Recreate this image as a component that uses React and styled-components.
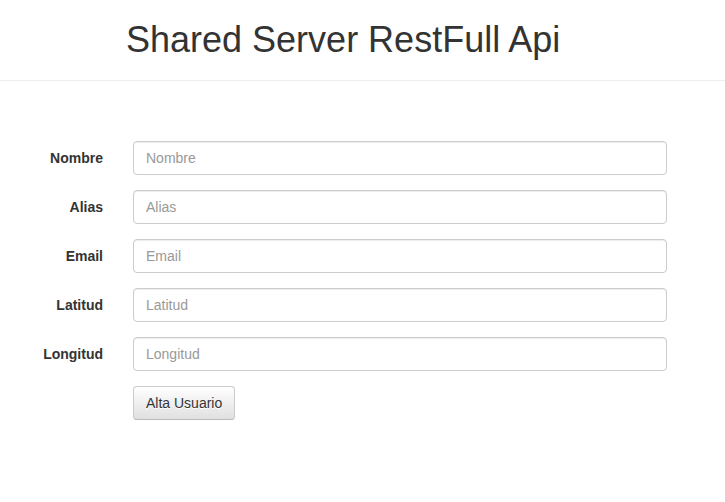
import React from "react";
import styled, { createGlobalStyle } from "styled-components";

const GlobalStyle = createGlobalStyle`
  body {
    margin: 0;
    background: #fff;
    color: #333;
    font-family: "Liberation Sans", Arial, sans-serif;
    font-size: 14px;
    line-height: 1.42857;
  }
  * { box-sizing: border-box; }
`;

const Header = styled.header`
  height: 81px;
  border-bottom: 1px solid #eee;
  padding: 20px 0 0 126px;
`;

const Title = styled.h1`
  margin: 0;
  font-size: 36px;
  font-weight: 500;
  line-height: 1.1;
  color: #333;
`;

const Form = styled.form`
  padding: 60px 0 0 0;
  display: grid;
  grid-template-columns: 118px 534px;
  row-gap: 15px;
  align-items: start;
`;

const Label = styled.label`
  padding: 7px 15px 0 0;
  text-align: right;
  font-weight: bold;
  line-height: 20px;
`;

const Field = styled.div`
  padding-left: 15px;
  grid-column: ${(p) => (p.$offset ? "2" : "auto")};
`;

const Input = styled.input`
  display: block;
  width: 534px;
  height: 34px;
  padding: 6px 12px;
  font-family: inherit;
  font-size: 14px;
  color: #555;
  background: #fff;
  border: 1px solid #ccc;
  border-radius: 4px;
  box-shadow: inset 0 1px 1px rgba(0, 0, 0, 0.075);
  &::placeholder { color: #999; }
`;

const Button = styled.button`
  height: 34px;
  padding: 6px 12px;
  font-family: inherit;
  font-size: 14px;
  line-height: 20px;
  color: #333;
  text-shadow: 0 1px 0 #fff;
  background-image: linear-gradient(to bottom, #fff 0%, #e0e0e0 100%);
  border: 1px solid #ccc;
  border-color: #ccc #ccc #bbb;
  border-radius: 4px;
  box-shadow: inset 0 1px 0 rgba(255, 255, 255, 0.15), 0 1px 1px rgba(0, 0, 0, 0.075);
`;

const fields = ["Nombre", "Alias", "Email", "Latitud", "Longitud"];

const App = () => (
  <>
    <GlobalStyle />
    <Header>
      <Title>Shared Server RestFull Api</Title>
    </Header>
    <Form onSubmit={(e) => e.preventDefault()}>
      {fields.map((f) => (
        <React.Fragment key={f}>
          <Label htmlFor={f}>{f}</Label>
          <Field>
            <Input id={f} placeholder={f} />
          </Field>
        </React.Fragment>
      ))}
      <Field $offset>
        <Button type="submit">Alta Usuario</Button>
      </Field>
    </Form>
  </>
);

export default App;
